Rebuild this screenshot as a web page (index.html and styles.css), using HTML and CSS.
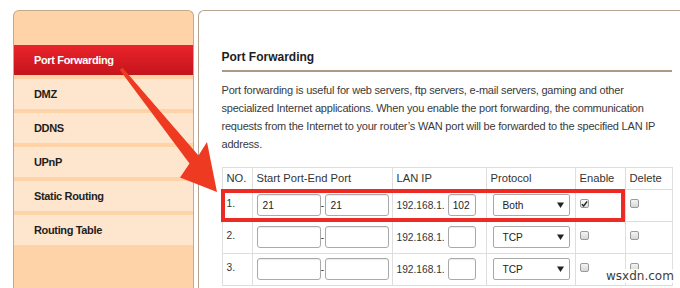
FILE: index.html
```html
<!DOCTYPE html>
<html>
<head>
<meta charset="utf-8">
<link rel="stylesheet" href="styles.css">
</head>
<body>
<div class="page">
  <nav class="sidebar">
    <div class="menu-item active">Port Forwarding</div>
    <div class="menu-item">DMZ</div>
    <div class="menu-item">DDNS</div>
    <div class="menu-item">UPnP</div>
    <div class="menu-item">Static Routing</div>
    <div class="menu-item">Routing Table</div>
  </nav>
  <main class="main">
    <h2 class="title">Port Forwarding</h2>
    <p class="desc">Port forwarding is useful for web servers, ftp servers, e-mail servers, gaming and other specialized Internet applications. When you enable the port forwarding, the communication requests from the Internet to your router’s WAN port will be forwarded to the specified LAN IP address.</p>
    <div class="table-wrap">
      <table class="rules">
        <colgroup>
          <col class="c-no"><col class="c-port"><col class="c-ip"><col class="c-proto"><col class="c-en"><col class="c-del">
        </colgroup>
        <thead>
          <tr><th>NO.</th><th>Start Port-End Port</th><th>LAN IP</th><th>Protocol</th><th>Enable</th><th>Delete</th></tr>
        </thead>
        <tbody>
          <tr class="r1">
            <td class="no">1.</td>
            <td><div class="ports"><span class="field port">21</span><span class="dash">-</span><span class="field port">21</span></div></td>
            <td><div class="ip">192.168.1.<span class="field oct">102</span></div></td>
            <td><span class="select">Both<svg class="caret" width="7" height="6" viewBox="0 0 7 6"><path d="M0 0.5H7L3.5 6Z" fill="#222"/></svg></span></td>
            <td><span class="check on"><svg width="8" height="8" viewBox="0 0 8 8"><path d="M1 4.2L3 6.3L7 1.2" fill="none" stroke="#222" stroke-width="1.6"/></svg></span></td>
            <td><span class="check"></span></td>
          </tr>
          <tr>
            <td class="no">2.</td>
            <td><div class="ports"><span class="field port"></span><span class="dash">-</span><span class="field port"></span></div></td>
            <td><div class="ip">192.168.1.<span class="field oct"></span></div></td>
            <td><span class="select">TCP<svg class="caret" width="7" height="6" viewBox="0 0 7 6"><path d="M0 0.5H7L3.5 6Z" fill="#222"/></svg></span></td>
            <td><span class="check"></span></td>
            <td><span class="check"></span></td>
          </tr>
          <tr>
            <td class="no">3.</td>
            <td><div class="ports"><span class="field port"></span><span class="dash">-</span><span class="field port"></span></div></td>
            <td><div class="ip">192.168.1.<span class="field oct"></span></div></td>
            <td><span class="select">TCP<svg class="caret" width="7" height="6" viewBox="0 0 7 6"><path d="M0 0.5H7L3.5 6Z" fill="#222"/></svg></span></td>
            <td><span class="check"></span></td>
            <td><span class="check"></span></td>
          </tr>
        </tbody>
      </table>
      <div class="highlight"></div>
    </div>
  </main>
</div>
<svg class="arrow" width="680" height="288" viewBox="0 0 680 288">
  <polygon points="122.5,67.8 198.5,155.5 207,142 217,192 180,177.5 189.5,163.5 119.8,70" fill="#ef3a22"/>
</svg>
<div class="watermark">wsxdn.com</div>
</body>
</html>
```
FILE: styles.css
```css
html, body {
  margin: 0;
  padding: 0;
}
body {
  width: 680px;
  height: 288px;
  overflow: hidden;
  background: #fff;
  font-family: "Liberation Sans", Arial, sans-serif;
  color: #333;
  position: relative;
}
.page {
  display: flex;
  padding: 10px 0 0 13px;
  height: 288px;
  box-sizing: border-box;
  overflow: hidden;
}
.sidebar {
  width: 181px;
  height: 278px;
  box-sizing: border-box;
  border: 1px solid #c6a98c;
  border-bottom: none;
  border-radius: 6px 6px 0 0;
  background: #fdd3a7;
  padding-top: 34px;
  flex-shrink: 0;
}
.menu-item {
  height: 30px;
  margin-bottom: 4px;
  background: #fee5cd;
  display: flex;
  align-items: center;
  padding-left: 20px;
  font-size: 11px;
  letter-spacing: -0.35px;
  font-weight: bold;
  color: #1e1e1e;
}
.menu-item.active {
  background: linear-gradient(#ea232b, #c4141c);
  color: #fff;
}
.main {
  flex: 1;
  margin-left: 4px;
  height: 278px;
  box-sizing: border-box;
  border: 1.5px solid #b8a48e;
  border-right: none;
  border-bottom: none;
  border-radius: 6px 0 0 0;
  padding: 0 8px 0 22.5px;
  overflow: hidden;
}
.title {
  margin: 38.5px 0 0 0;
  font-size: 12px;
  line-height: 14px;
  font-weight: bold;
  color: #1e1e1e;
  padding-bottom: 6px;
  border-bottom: 2px solid #ad9a85;
}
.desc {
  margin: 9px 0 0 0;
  max-width: 440px;
  font-size: 11px;
  letter-spacing: -0.21px;
  line-height: 18px;
  color: #3a3a3a;
}
.table-wrap {
  position: relative;
  margin-top: 14px;
}
.rules {
  border-collapse: collapse;
  table-layout: fixed;
  width: 450px;
  font-size: 10.2px;
  color: #333;
}
.c-no { width: 30px; }
.c-port { width: 140px; }
.c-ip { width: 94px; }
.c-proto { width: 89px; }
.c-en { width: 50px; }
.c-del { width: 47px; }
.rules th, .rules td {
  border: 1px solid #dedede;
  padding: 0 0 0 4px;
  text-align: left;
  white-space: nowrap;
}
.rules th {
  height: 21px;
  font-weight: normal;
  font-size: 11.2px;
  color: #333;
}
.rules td {
  height: 31px;
  vertical-align: middle;
}
.rules td.no {
  vertical-align: top;
  padding-top: 8px;
  box-sizing: border-box;
}
.ports {
  display: flex;
  align-items: center;
}
.field {
  display: inline-flex;
  align-items: center;
  box-sizing: border-box;
  height: 22px;
  border: 1px solid #a9a9a9;
  border-radius: 3px;
  background: #fff;
  box-shadow: inset 0 1px 1px rgba(0,0,0,0.08);
  padding-left: 5px;
  font-size: 10.2px;
  color: #222;
}
.port { width: 64px; }
.dash {
  width: 4px;
  text-align: center;
  font-size: 10px;
}
.ip {
  display: flex;
  align-items: center;
}
.oct {
  width: 28px;
  margin-left: 3px;
  padding-left: 4px;
}
.select {
  display: inline-flex;
  align-items: center;
  justify-content: space-between;
  box-sizing: border-box;
  width: 77px;
  height: 22px;
  margin-left: 2px;
  border: 1px solid #a9a9a9;
  border-radius: 2px;
  background: #fff;
  padding: 0 5px 0 9px;
  font-size: 10.2px;
  color: #222;
}
.caret { display: block; }
.check {
  display: inline-flex;
  align-items: center;
  justify-content: center;
  width: 9px;
  height: 9px;
  box-sizing: border-box;
  border: 1px solid #9a9a9a;
  border-radius: 2px;
  background: linear-gradient(#f4f4f4, #d6d6d6);
  vertical-align: middle;
  position: relative;
  top: -2px;
}
.check.on {
  background: linear-gradient(#fafafa, #e2e2e2);
}
.check svg { display: block; }
.highlight {
  position: absolute;
  left: -1px;
  top: 22px;
  width: 404px;
  height: 33px;
  border: 4px solid #ee2a24;
  box-sizing: border-box;
  pointer-events: none;
}
.arrow {
  position: absolute;
  left: 0;
  top: 0;
  pointer-events: none;
}
.watermark {
  position: absolute;
  left: 604px;
  top: 269px;
  padding: 0 2px;
  font-family: "DejaVu Sans", sans-serif;
  font-size: 12px;
  color: #3c3c3c;
  background: rgba(255,255,255,0.85);
}
```
